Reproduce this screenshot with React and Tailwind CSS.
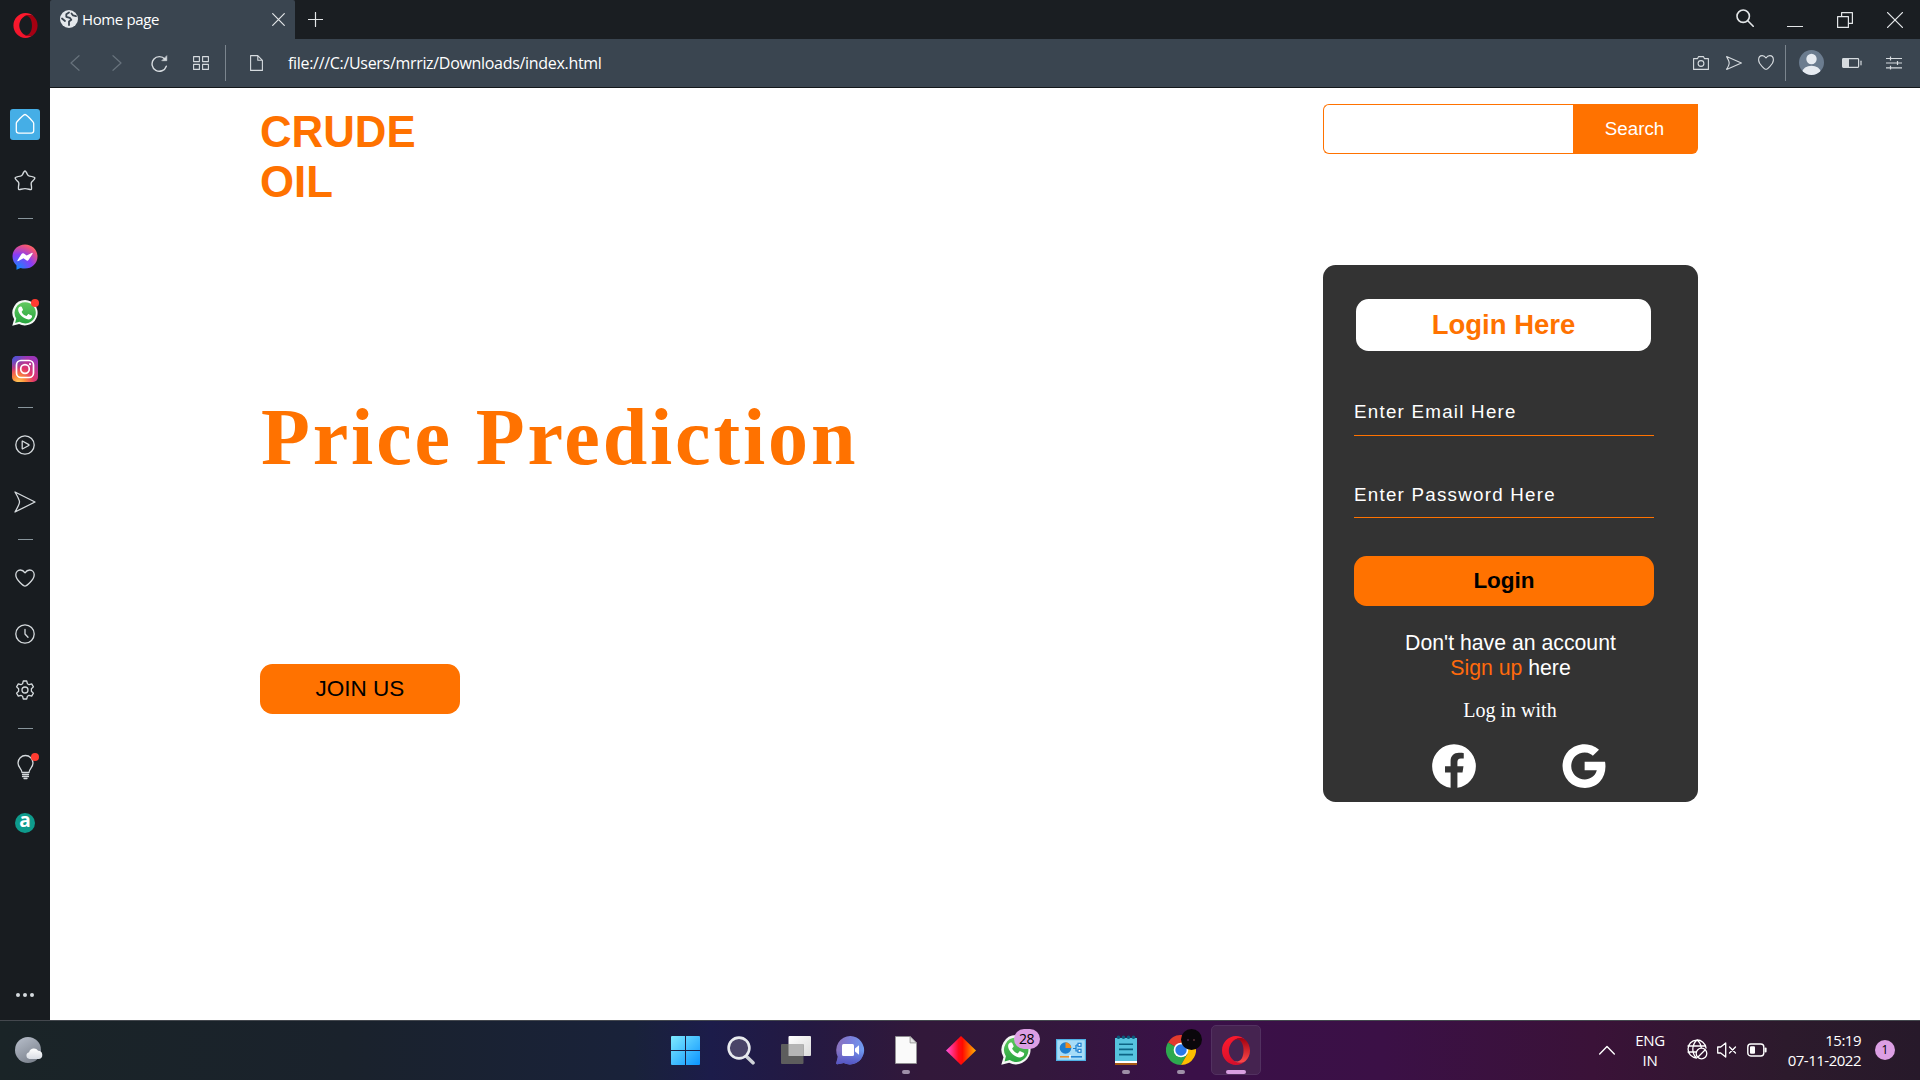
import React from "react";
import { IoLogoFacebook, IoLogoGoogle } from "react-icons/io5";

const Stroke = ({ w, h = w, sw = 1.4, className = "", children }) => (
  <svg
    width={w}
    height={h}
    viewBox={`0 0 ${w} ${h}`}
    fill="none"
    stroke="currentColor"
    strokeWidth={sw}
    strokeLinejoin="round"
    strokeLinecap="round"
    className={`shrink-0 ${className}`}
  >
    {children}
  </svg>
);

const OperaLogo = ({ w, h, id, inner }) => (
  <svg width={w} height={h} viewBox="0 0 28 29" className="shrink-0">
    <defs>
      <linearGradient id={id + "a"} x1="0" y1="0" x2="0.3" y2="1">
        <stop offset="0" stopColor="#ff1b2d" />
        <stop offset="1" stopColor={inner ? "#f0142c" : "#d80f2c"} />
      </linearGradient>
      <linearGradient id={id + "b"} x1="0" y1="0" x2="0" y2="1">
        <stop offset="0" stopColor="#a3000f" />
        <stop offset="1" stopColor={inner ? "#a70014" : "#ff4b4b"} />
      </linearGradient>
    </defs>
    <path
      fill={`url(#${id}a)`}
      fillRule="evenodd"
      d="M14 0C6.3 0 0 6.500 0 14.500S6.300 29 14 29c3.600 0 6.900-1.400 9.300-3.700-5 3-10.800 1.400-14-3.300C6 17 6 12 9.300 7c3.200-4.700 9-6.300 14-3.300C20.900 1.400 17.600 0 14 0z"
    />
    <path
      fill={`url(#${id}b)`}
      d="M9.300 7C11 4.500 13.500 3.300 15.500 3.500 19.500 3.900 21.500 9 21.500 14.500S19.500 25 15.500 25.500C13.500 25.700 11 24.500 9.300 22c3.200 4.700 9 6.300 14 3.300C26.200 22.700 28 18.800 28 14.500S26.200 6.300 23.300 3.700c-5-3-10.800-1.400-14 3.300z"
    />
  </svg>
);

const WhatsApp = ({ s, id }) => (
  <svg width={s} height={s} viewBox="0 0 30 30" className="shrink-0">
    <defs>
      <linearGradient id={id} x1="0" y1="0" x2="0" y2="1">
        <stop offset="0" stopColor="#61c95f" />
        <stop offset="1" stopColor="#28a53f" />
      </linearGradient>
    </defs>
    <path fill="#f4f8f4" d="M15.200 0A14.700 14.700 0 0 0 2.500 22.200L.3 29.800l7.900-2A14.700 14.700 0 1 0 15.200 0z" />
    <path fill={`url(#${id})`} d="M15.200 2.600a12.200 12.200 0 0 0-10.300 18.700L3.600 26.400l5.100-1.300A12.200 12.200 0 1 0 15.200 2.600z" />
    <path
      fill="#fff"
      d="M11.300 8.200c-.4-.8-1-.8-1.500-.8-1 0-2.700 1.300-2.700 3.700 0 5 6.400 11.300 11.900 11.300 2.200 0 4.200-1.500 4.200-3.600 0-.5-.1-.8-.6-1l-3.200-1.500c-.5-.2-.8-.1-1.100.3l-1.300 1.600c-.3.3-.6.3-1 .1-2-.9-3.700-2.500-4.700-4.300-.2-.4-.1-.7.200-1l1-1.200c.2-.3.2-.6.1-.9z"
    />
  </svg>
);

const Dot = () => <span className="absolute -right-[1px] -top-[1px] h-2 w-2 rounded-full bg-[#ff3b30]" />;

const SideItem = ({ children }) => (
  <div className="flex h-[56.25px] w-full shrink-0 items-center justify-center text-[#d5dadd]">{children}</div>
);
const SideDash = () => (
  <div className="flex h-5 w-full shrink-0 items-center justify-center">
    <div className="h-px w-[15px] bg-[#88959c]" />
  </div>
);

function Sidebar() {
  return (
    <aside className="flex w-[50px] shrink-0 flex-col bg-[#181c20]">
      <div className="flex h-24 shrink-0 items-start justify-center pt-[13px]">
        <OperaLogo w={25} h={25} id="opS" inner />
      </div>
      <SideItem>
        <div className="flex h-[31px] w-[30px] items-center justify-center rounded-[3px] bg-[#45aee6] text-white">
          <Stroke w={20} h={22} sw={1.3}>
            <path d="M10 1.500C9 1.500 4 6.500 2 8.800c-.5.600-.7 1-.7 1.700v7.300c0 1.500.9 2.400 2.400 2.400h12.600c1.500 0 2.400-.9 2.400-2.400v-7.300c0-.7-.2-1.100-.7-1.700C16 6.500 11 1.500 10 1.500z" />
          </Stroke>
        </div>
      </SideItem>
      <SideItem>
        <Stroke w={22} h={21} sw={1.4} className="mr-px">
          <path d="M11 1c.8 0 1.200.7 2.300 3.300.5 1.200 1 1.600 2.200 1.800 3.400.5 5 .8 5.300 1.600.4 1-.7 1.900-2.900 4-.8.8-.9 1.500-.7 2.600.5 3.100.6 4.700 0 5.200-1 .6-3-.9-6.200-.9s-5.200 1.500-6.200.9c-.6-.5-.5-2.100 0-5.200.2-1.100.1-1.800-.7-2.600-2.200-2.100-3.300-3-2.900-4 .3-.8 1.900-1.100 5.300-1.600 1.200-.2 1.700-.6 2.200-1.800C9.800 1.700 10.200 1 11 1z" />
        </Stroke>
      </SideItem>
      <SideDash />
      <SideItem>
        <svg width="26" height="26" viewBox="0 0 26 26">
          <defs>
            <radialGradient id="msg" cx=".2" cy="1" r="1.100">
              <stop offset="0" stopColor="#0a8dff" />
              <stop offset=".55" stopColor="#8a3cf5" />
              <stop offset=".9" stopColor="#f0527a" />
              <stop offset="1" stopColor="#ff6a63" />
            </radialGradient>
          </defs>
          <path fill="url(#msg)" d="M13 .5C5.900.5.500 5.700.500 12.500c0 3.500 1.500 6.700 4 9v4.200l4-1.800c1.400.4 3 .7 4.500.7 7.100 0 12.500-5.300 12.500-12.100S20.100.5 13 .5z" />
          <path fill="#fff" d="M5.500 16.200l4-6.200c.6-.9 1.600-1.100 2.400-.5l2.800 2.100 5-2.700c.7-.4 1.300.2.900.9l-3.900 6c-.6.9-1.600 1.100-2.400.5l-2.800-2-5.100 2.800c-.7.400-1.300-.2-.9-.9z" />
        </svg>
      </SideItem>
      <SideItem>
        <div className="relative">
          <WhatsApp s={26} id="waS" />
          <Dot />
        </div>
      </SideItem>
      <SideItem>
        <svg width="26" height="26" viewBox="0 0 26 26">
          <defs>
            <radialGradient id="ig1" cx=".25" cy="1.050" r="1.100">
              <stop offset="0" stopColor="#ffd35c" />
              <stop offset=".25" stopColor="#fb8a3c" />
              <stop offset=".55" stopColor="#e0356b" />
              <stop offset="1" stopColor="#9b35b8" />
            </radialGradient>
            <radialGradient id="ig2" cx="0" cy="0" r=".6">
              <stop offset="0" stopColor="#3a5be0" />
              <stop offset="1" stopColor="#3a5be0" stopOpacity="0" />
            </radialGradient>
          </defs>
          <rect width="26" height="26" rx="5" fill="url(#ig1)" />
          <rect width="26" height="26" rx="5" fill="url(#ig2)" />
          <g fill="none" stroke="#fff" strokeWidth="1.700">
            <rect x="4.500" y="4.500" width="17" height="17" rx="4.500" />
            <circle cx="13" cy="13" r="4.300" />
          </g>
          <circle cx="18" cy="8.200" r="1.100" fill="#fff" />
        </svg>
      </SideItem>
      <SideDash />
      <SideItem>
        <Stroke w={20} sw={1.3} className="mr-px">
          <circle cx="10" cy="10" r="9.200" />
          <path d="M7.200 6.500v7c0 .3.300.5.600.3l6-3.300c.4-.2.400-.7 0-.9l-6-3.400c-.3-.1-.6 0-.6.300z" />
        </Stroke>
      </SideItem>
      <SideItem>
        <Stroke w={22} sw={1.3}>
          <path d="M1 1l20 10L1 21c3.500-6 4.500-8 4.500-10S4.500 7 1 1z" />
        </Stroke>
      </SideItem>
      <SideDash />
      <SideItem>
        <Stroke w={20} h={18} sw={1.3} className="mr-px">
          <path d="M10 17.200c1 0 9.200-6 9.200-11.400C19.200 3 17.200 1 14.700 1 12.500 1 11 2.300 10 3.800 9 2.300 7.500 1 5.300 1 2.800 1 .8 3 .8 5.800.8 11.200 9 17.200 10 17.200z" />
        </Stroke>
      </SideItem>
      <SideItem>
        <Stroke w={20} sw={1.3} className="mr-px">
          <circle cx="10" cy="10" r="9.200" />
          <path d="M10 5.500V10l3 3.300" />
        </Stroke>
      </SideItem>
      <SideItem>
        <Stroke w={20} sw={1.3} className="mr-px">
          <path d="M8.300 1h3.400l.7 2.700 1.700 1 2.600-.8 1.700 3-2 1.900v2.400l2 1.900-1.700 3-2.600-.8-1.700 1-.7 2.700H8.300l-.7-2.700-1.700-1-2.600.8-1.700-3 2-1.900V8.800l-2-1.900 1.700-3 2.600.8 1.700-1z" />
          <circle cx="10" cy="10" r="3" />
        </Stroke>
      </SideItem>
      <SideDash />
      <SideItem>
        <div className="relative">
          <Stroke w={24} h={26} sw={1.3}>
            <path d="M9 18.500c0-3.500-4-5-4-9.500a7.500 7.500 0 0 1 15 0c0 4.500-4 6-4 9.500z" />
            <path d="M9.500 20.500h6M9.500 22.500h6M11 24.500h3" />
          </Stroke>
          <span className="absolute -right-[2px] -top-[1px] h-2 w-2 rounded-full bg-[#ff3b30]" />
        </div>
      </SideItem>
      <SideItem>
        <div className="flex h-5 w-5 items-center justify-center rounded-full bg-[#0e9b8c] pb-1 font-['Open_Sans',sans-serif] text-[19px] font-bold leading-none text-white">
          a
        </div>
      </SideItem>
      <div className="mt-auto flex h-[50px] items-center justify-center gap-[3px]">
        <span className="h-1 w-1 rounded-full bg-[#d5dadd]" />
        <span className="h-1 w-1 rounded-full bg-[#d5dadd]" />
        <span className="h-1 w-1 rounded-full bg-[#d5dadd]" />
      </div>
    </aside>
  );
}

function TitleBar() {
  return (
    <div className="flex h-[39px] items-stretch bg-[#1a1e22] text-[#e3e6e8]">
      <div className="flex w-[245px] items-center rounded-t-[2px] bg-[#3a4550] pb-px pl-[10px] pr-[10px]">
        <svg width="18" height="18" viewBox="0 0 18 18">
          <circle cx="9" cy="9" r="9" fill="#e4e8ec" />
          <path
            fill="none"
            stroke="#3a4550"
            strokeWidth="1.800"
            strokeLinejoin="round"
            strokeLinecap="round"
            d="M9 2.500L6.300 4.300v2.500l3.500 1 1.500 2-2.300 1.700v3.500M16 6.200l-3-.8-1.500-1.900M2 8.500l3 2.500"
          />
        </svg>
        <span className="ml-1 text-[15px] leading-5 tracking-[-0.38px] text-white">Home page</span>
        <Stroke w={13} sw={1.2} className="ml-auto">
          <path d="M.7.7l11.600 11.600M12.300.7L.7 12.300" />
        </Stroke>
      </div>
      <div className="flex w-[41px] items-center justify-center pb-px">
        <Stroke w={15} sw={1.2}>
          <path d="M7.500.5v14M.5 7.500h14" />
        </Stroke>
      </div>
      <div className="ml-auto flex">
        <div className="flex w-[50px] items-center justify-center">
          <Stroke w={18} sw={1.6} className="mb-[3px]">
            <circle cx="7.200" cy="7.200" r="6.200" />
            <path d="M11.800 11.800l5.400 5.400" />
          </Stroke>
        </div>
        <div className="flex w-[50px] items-end justify-center pb-3">
          <div className="h-px w-4 bg-[#e3e6e8]" />
        </div>
        <div className="flex w-[50px] items-center justify-center">
          <Stroke w={16} sw={1.2}>
            <path d="M.6 4.600h10.800v10.800H.6zM4.600 4.400V.6h10.800v10.800h-3.800" />
          </Stroke>
        </div>
        <div className="flex w-[50px] items-center justify-center">
          <Stroke w={16} sw={1.3}>
            <path d="M.6.6l14.800 14.800M15.400.6L.6 15.400" />
          </Stroke>
        </div>
      </div>
    </div>
  );
}

const cell = "flex shrink-0 items-center justify-center";

function AddressBar() {
  return (
    <div className="flex h-[49px] items-stretch border-b border-[#14181b] bg-[#3a4550] pl-1 text-[#d6dbdf]">
      <div className={`${cell} w-[42px] text-[#67727c]`}>
        <Stroke w={10} h={16} sw={1.2}>
          <path d="M9 .7L1 8l8 7.300" />
        </Stroke>
      </div>
      <div className={`${cell} w-[42px] text-[#67727c]`}>
        <Stroke w={10} h={16} sw={1.2}>
          <path d="M1 .7L9 8l-8 7.300" />
        </Stroke>
      </div>
      <div className={`${cell} w-[42px]`}>
        <Stroke w={17} sw={1.4}>
          <path d="M15.300 11.200A7.300 7.300 0 1 1 14 4.300" />
          <path d="M15.800 1v4.700h-4.700z" fill="currentColor" strokeWidth=".6" />
        </Stroke>
      </div>
      <div className={`${cell} w-[42px]`}>
        <Stroke w={16} h={14} sw={1.1}>
          <rect x=".6" y=".6" width="5.800" height="5" />
          <rect x="9.600" y=".6" width="5.800" height="5" />
          <rect x=".6" y="8.400" width="5.800" height="5" />
          <rect x="9.600" y="8.400" width="5.800" height="5" />
        </Stroke>
      </div>
      <div className={`${cell} w-[7px]`}>
        <div className="h-9 w-px bg-[#7b858e]" />
      </div>
      <div className={`${cell} w-[54px]`}>
        <Stroke w={13} h={16} sw={1.1}>
          <path d="M.6.6h7.200l4.600 4.700v10.100H.6zM7.800.6v4.700h4.600" />
        </Stroke>
      </div>
      <div className="ml-[5px] flex items-center text-[16px] tracking-[-0.31px] text-white">
        file:///C:/Users/mrriz/Downloads/index.html
      </div>
      <div className="ml-auto flex pr-[2.5px]">
        <div className={`${cell} w-[33px]`}>
          <Stroke w={16} h={14} sw={1.1}>
            <path d="M.6 2.600h4L5.600.6h4.800l1 2h4v10.800H.6z" />
            <circle cx="8" cy="7.500" r="2.900" />
          </Stroke>
        </div>
        <div className={`${cell} w-[33px]`}>
          <Stroke w={16} h={14} sw={1.1}>
            <path d="M.6.6L15.400 7 .6 13.400C2.600 10 3.200 8.500 3.200 7S2.600 4 .6.6z" />
          </Stroke>
        </div>
        <div className={`${cell} w-[31px]`}>
          <Stroke w={16} h={15} sw={1.1} className="mb-[2px]">
            <path d="M8 14.300c.8 0 7.400-5 7.400-9.300C15.400 2.400 13.900.6 11.800.6 10 .6 8.800 1.700 8 3 7.200 1.700 6 .6 4.200.6 2.100.6.6 2.400.6 5c0 4.300 6.600 9.300 7.400 9.300z" />
          </Stroke>
        </div>
        <div className={`${cell} w-[8px]`}>
          <div className="h-9 w-px bg-[#7b858e]" />
        </div>
        <div className={`${cell} w-[44px] pb-px`}>
          <svg width="25" height="25" viewBox="0 0 25 25">
            <defs>
              <clipPath id="av">
                <circle cx="12.500" cy="12.500" r="12.500" />
              </clipPath>
            </defs>
            <circle cx="12.500" cy="12.500" r="12.500" fill="#6b7c8f" />
            <g clipPath="url(#av)" fill="#e6ebf1">
              <circle cx="12.500" cy="9" r="5.200" />
              <ellipse cx="12.500" cy="22" rx="9" ry="6.300" />
            </g>
          </svg>
        </div>
        <div className={`${cell} w-[37px] pb-px`}>
          <Stroke w={20} h={10} sw={1.2}>
            <rect x=".6" y=".6" width="16" height="8.800" rx=".8" />
            <path d="M1 1h6v8H1z" fill="currentColor" stroke="none" />
            <path d="M19 3.200v3.600" />
          </Stroke>
        </div>
        <div className={`${cell} w-[47px]`}>
          <Stroke w={16} h={14} sw={1.2}>
            <path d="M0 2.500h16M0 7h16M0 11.800h16M4.500.6v3.800M11.500 5v4M4.500 9.800v3.800" strokeLinecap="butt" />
          </Stroke>
        </div>
      </div>
    </div>
  );
}

function PageContent() {
  return (
    <main className="flex flex-1 justify-between bg-white pl-[210px] pr-[222px] font-['Liberation_Sans',Arial,sans-serif]">
      <div className="flex flex-col items-start">
        <h1 className="mt-[19px] w-[200px] text-[43.75px] font-bold leading-[50px] text-[#ff7200]">CRUDE OIL</h1>
        <h2 className="ml-px mt-[184px] whitespace-nowrap font-['Liberation_Serif',serif] text-[80px] font-bold leading-[92px] tracking-[2.85px] text-[#ff7200]">
          Price Prediction
        </h2>
        <button className="mt-[181px] h-[50px] w-[200px] rounded-[12.5px] bg-[#ff7200] pb-px text-[22.5px] leading-6 text-black">
          JOIN US
        </button>
      </div>
      <div className="flex w-[375px] flex-col">
        <div className="mt-4 flex h-[50px]">
          <div className="w-[250px] rounded-l-[6px] border border-r-0 border-[#ff7200]" />
          <button className="flex-1 rounded-br-[6px] bg-[#ff7200] pr-[2px] text-[18.75px] leading-6 text-white">
            Search
          </button>
        </div>
        <div className="mt-[111px] flex h-[537px] flex-col rounded-[12.5px] bg-[#333333]">
          <div className="ml-[33px] mt-[34px] flex h-[52px] w-[295px] items-center justify-center rounded-[12.5px] bg-white text-[27.5px] font-bold leading-8 text-[#ff7200]">
            Login Here
          </div>
          <div className="ml-[31px] mt-12 h-[37px] w-[300px] border-b border-[#ff7200] text-[18.75px] leading-[26px] tracking-[1.25px] text-white">
            Enter Email Here
          </div>
          <div className="ml-[31px] mt-[46px] h-9 w-[300px] border-b border-[#ff7200] text-[18.75px] leading-[26px] tracking-[1.25px] text-white">
            Enter Password Here
          </div>
          <button className="ml-[31px] mt-[38px] h-[50px] w-[300px] rounded-[12.5px] bg-[#ff7200] text-[22.5px] font-bold leading-6 text-black">
            Login
          </button>
          <p className="mt-[25px] text-center text-[21.25px] leading-[25px] text-white">
            Don't have an account
            <br />
            <span className="text-[#ff6a0c]">Sign up</span> here
          </p>
          <p className="mt-[18px] pr-px text-center font-['Liberation_Serif',serif] text-[20px] leading-[22px] text-white">
            Log in with
          </p>
          <div className="ml-[106px] mt-5 flex gap-20 text-white">
            <IoLogoFacebook size={50} />
            <IoLogoGoogle size={50} />
          </div>
        </div>
      </div>
    </main>
  );
}

const TaskCell = ({ children, running }) => (
  <div className="flex w-[55px] flex-col items-center">
    <div className="mt-[14px] flex h-[30px] items-center justify-center">{children}</div>
    {running && <div className="mt-[5px] h-1 w-2 rounded-full bg-[#9f90a8]" />}
  </div>
);

function Taskbar() {
  return (
    <footer className="flex h-[60px] shrink-0 items-stretch border-t border-[#44484e] bg-[linear-gradient(90deg,#1a2427_0%,#1a222c_18%,#19223a_33%,#1c1c4a_37%,#241942_42%,#32183a_48%,#33183c_54%,#3a1048_62%,#3b1046_72%,#3a1238_83%,#2c1a2c_93%,#27192a_100%)] text-white">
      <div className="flex w-[658px] items-start pl-[14px] pt-[15px]">
        <svg width="30" height="28" viewBox="0 0 30 28">
          <defs>
            <linearGradient id="moon" x1="0" y1="0" x2=".6" y2="1">
              <stop offset="0" stopColor="#b9c0cc" />
              <stop offset="1" stopColor="#7d848f" />
            </linearGradient>
            <linearGradient id="cloud" x1="0" y1="0" x2="0" y2="1">
              <stop offset="0" stopColor="#ffffff" />
              <stop offset="1" stopColor="#d9dde4" />
            </linearGradient>
          </defs>
          <circle cx="14" cy="14" r="13" fill="url(#moon)" />
          <path fill="url(#cloud)" d="M15.500 23a3.400 3.400 0 0 1-.4-6.700 5 5 0 0 1 9-1.600A4.200 4.200 0 0 1 25 23z" />
        </svg>
      </div>

      <TaskCell>
        <svg width="29" height="29" viewBox="0 0 29 29">
          <defs>
            <linearGradient id="win" x1="0" y1="0" x2="29" y2="29" gradientUnits="userSpaceOnUse">
              <stop offset="0" stopColor="#7feaff" />
              <stop offset="1" stopColor="#0a93ff" />
            </linearGradient>
          </defs>
          <path fill="url(#win)" d="M1 0h13v14H0V1a1 1 0 0 1 1-1zM15 0h13a1 1 0 0 1 1 1v13H15zM0 15h14v14H1a1 1 0 0 1-1-1zM15 15h14v13a1 1 0 0 1-1 1H15z" />
        </svg>
      </TaskCell>
      <TaskCell>
        <svg width="28" height="29" viewBox="0 0 28 29">
          <path d="M19.500 20.500l6.500 6.300" stroke="#cfd2d8" strokeWidth="3.600" strokeLinecap="round" />
          <circle cx="12" cy="12" r="10.400" fill="#4a4468" stroke="#e8eaee" strokeWidth="2.600" />
        </svg>
      </TaskCell>
      <TaskCell>
        <svg width="30" height="28" viewBox="0 0 30 28">
          <defs>
            <linearGradient id="tv" x1="0" y1="0" x2="1" y2="1">
              <stop offset="0" stopColor="#ffffff" />
              <stop offset="1" stopColor="#dcdcdc" />
            </linearGradient>
          </defs>
          <rect x="7.500" width="22.500" height="20" rx="1" fill="url(#tv)" />
          <rect y="8" width="22.500" height="20" rx="1" fill="#5d5d5d" />
          <rect x="7.500" y="8" width="15" height="12" fill="#b5b5b5" />
        </svg>
      </TaskCell>
      <TaskCell>
        <svg width="29" height="29" viewBox="0 0 29 29">
          <defs>
            <linearGradient id="chat" x1="0" y1=".2" x2="1" y2=".4">
              <stop offset="0" stopColor="#8b6fb8" />
              <stop offset=".5" stopColor="#7a7fdc" />
              <stop offset="1" stopColor="#6e9bf0" />
            </linearGradient>
            <linearGradient id="chat2" x1="0" y1="0" x2="0" y2="1">
              <stop offset=".5" stopColor="#5355c4" stopOpacity="0" />
              <stop offset="1" stopColor="#5355c4" />
            </linearGradient>
          </defs>
          <path fill="url(#chat)" d="M14.500 0a14.200 14.200 0 0 0-12.700 20.700L.3 27c-.2 1 .4 1.500 1.300 1.300l6.200-1.300A14.200 14.200 0 1 0 14.500 0z" />
          <path fill="url(#chat2)" d="M14.500 0a14.200 14.200 0 0 0-12.700 20.700L.3 27c-.2 1 .4 1.500 1.300 1.300l6.200-1.300A14.200 14.200 0 1 0 14.500 0z" />
          <rect x="6" y="8" width="12" height="12" rx="1.500" fill="#fff" />
          <path fill="#fff" d="M19 12.500l4-3.200v9.400l-4-3.200z" />
        </svg>
      </TaskCell>
      <TaskCell running>
        <svg width="22" height="28" viewBox="0 0 22 28">
          <path fill="#fafafa" stroke="#8d8d8d" strokeWidth=".8" d="M.4.4h14.700l6.500 6.500v20.700H.4z" />
          <path fill="#e6e6e6" stroke="#8d8d8d" strokeWidth=".8" d="M15.100.4v6.500h6.500z" />
        </svg>
      </TaskCell>
      <TaskCell>
        <svg width="30" height="29" viewBox="0 0 30 29">
          <defs>
            <linearGradient id="dia" x1="0" y1="0" x2="1" y2="0">
              <stop offset="0" stopColor="#ff52e0" />
              <stop offset=".42" stopColor="#ff0a1e" />
              <stop offset=".55" stopColor="#ff0c00" />
              <stop offset="1" stopColor="#ffb400" />
            </linearGradient>
          </defs>
          <path fill="url(#dia)" d="M15 0l15 14.500L15 29 0 14.500z" />
        </svg>
      </TaskCell>
      <TaskCell>
        <div className="relative">
          <WhatsApp s={30} id="waT" />
          <span className="absolute -right-[9px] -top-[6px] flex h-5 w-[26px] items-center justify-center rounded-full bg-[#dc9fe4] text-[14px] leading-5 tracking-[-0.5px] text-black">
            28
          </span>
        </div>
      </TaskCell>
      <TaskCell>
        <svg width="30" height="22" viewBox="0 0 30 22">
          <rect x=".6" y=".6" width="28.800" height="20.800" fill="#a6dcf8" stroke="#4fb0e4" strokeWidth="1.200" />
          <circle cx="9.500" cy="9" r="5.800" fill="#1c7fd0" />
          <path fill="#f28c1e" d="M9.500 9V3.200A5.800 5.800 0 0 1 15.300 9z" />
          <g fill="none" stroke="#1c7fd0" strokeWidth="1.200">
            <path d="M17 9.500h3M20 6v6h2M20 6h2" />
            <rect x="22" y="4.300" width="3" height="3" fill="#fff" />
            <rect x="22" y="10.300" width="3" height="3" fill="#fff" />
          </g>
          <path stroke="#f28c1e" strokeWidth="1.500" d="M4 17.800h10" />
          <path stroke="#1c7fd0" strokeWidth="1.500" d="M14 17.800h12" />
          <path stroke="#fff" strokeWidth="1.500" d="M14 16v3.500" />
        </svg>
      </TaskCell>
      <TaskCell running>
        <svg width="22" height="30" viewBox="0 0 22 30">
          <rect y="26" width="22" height="4" rx=".6" fill="#a65a14" />
          <rect y="25" width="22" height="3" fill="#fff" />
          <path fill="#56c3de" d="M0 3h22v23H0z" />
          <g fill="#0c5a7a">
            <circle cx="3.500" cy="2.200" r="1.800" />
            <circle cx="8.500" cy="2.200" r="1.800" />
            <circle cx="13.500" cy="2.200" r="1.800" />
            <circle cx="18.500" cy="2.200" r="1.800" />
          </g>
          <path stroke="#0c6484" strokeWidth="1.600" d="M4 9.200h14M4 14.400h14M4 19.600h14" />
        </svg>
      </TaskCell>
      <TaskCell running>
        <div className="relative">
          <svg width="30" height="30" viewBox="0 0 30 30">
            <path fill="#e33b2e" d="M15 15L2 7.500A15 15 0 0 1 28 7.500z" />
            <path fill="#2da94f" d="M15 15L2 7.500A15 15 0 0 0 15 30l6.500-11.200z" />
            <path fill="#fdbd00" d="M15 15V7.500h13A15 15 0 0 1 15 30l6.500-11.200z" />
            <circle cx="15" cy="15" r="7.300" fill="#fff" />
            <circle cx="15" cy="15" r="5.700" fill="#2a78e8" />
          </svg>
          <span className="absolute -right-[6px] -top-[6px] flex h-[21px] w-[21px] items-center justify-center gap-[4px] rounded-full bg-[#0a070b]">
            <span className="h-[2px] w-[2px] rounded-full bg-[#4c2a50]" />
            <span className="h-[2px] w-[2px] rounded-full bg-[#5c3238]" />
          </span>
        </div>
      </TaskCell>
      <div className="flex w-[55px] justify-center">
        <div className="mt-1 flex h-[50px] w-[50px] flex-col items-center rounded-[5px] border border-[#523160] bg-[#452350]">
          <div className="mt-[9px] flex h-[30px] items-center">
            <OperaLogo w={28} h={29} id="opT" />
          </div>
          <div className="mt-[5px] h-1 w-5 rounded-full bg-[#d99fe2]" />
        </div>
      </div>

      <div className="ml-auto flex items-center pb-[2px]">
        <Stroke w={16} h={10} sw={1.4} className="mr-5">
          <path d="M.7 9L8 1.500 15.300 9" />
        </Stroke>
        <div className="mr-[22px] w-[30px] text-center text-[15px] leading-5 tracking-[-0.3px]">
          <div>ENG</div>
          <div>IN</div>
        </div>
        <Stroke w={21} sw={1.3} className="mr-[9px]">
          <path d="M19 9A9 9 0 1 0 9.500 19M1 7h17.500M1 13h8M10 1C4.500 6 4.500 14 9.500 19M10 1c2.500 2 4 4.500 4.200 7.500" />
          <circle cx="14.500" cy="14.500" r="5.300" />
          <path d="M11 18l7-7" />
        </Stroke>
        <Stroke w={20} h={16} sw={1.3} className="mr-[10px]">
          <path d="M.7 5v6h3l5 4V1l-5 4zM12.500 5l6 6M18.500 5l-6 6" />
        </Stroke>
        <Stroke w={20} h={14} sw={1.4}>
          <rect x=".8" y="1" width="16" height="12" rx="3" />
          <rect x="3" y="3.200" width="5" height="7.600" rx="1" fill="currentColor" stroke="none" />
          <path d="M18.600 5.500v3" strokeWidth="2" />
        </Stroke>
        <div className="w-[94px] text-right text-[15px] leading-5 tracking-[-0.5px]">
          <div>15:19</div>
          <div>07-11-2022</div>
        </div>
        <div className="ml-[14px] mr-[25px] flex h-5 w-5 items-center justify-center rounded-full bg-[#dc9fe4] text-[12px] text-black">
          1
        </div>
      </div>
    </footer>
  );
}

export default function App() {
  return (
    <div className="flex h-[1080px] w-[1920px] flex-col overflow-hidden font-['Open_Sans',sans-serif]">
      <div className="flex h-[1020px] shrink-0">
        <Sidebar />
        <div className="flex flex-1 flex-col">
          <TitleBar />
          <AddressBar />
          <PageContent />
        </div>
      </div>
      <Taskbar />
    </div>
  );
}
